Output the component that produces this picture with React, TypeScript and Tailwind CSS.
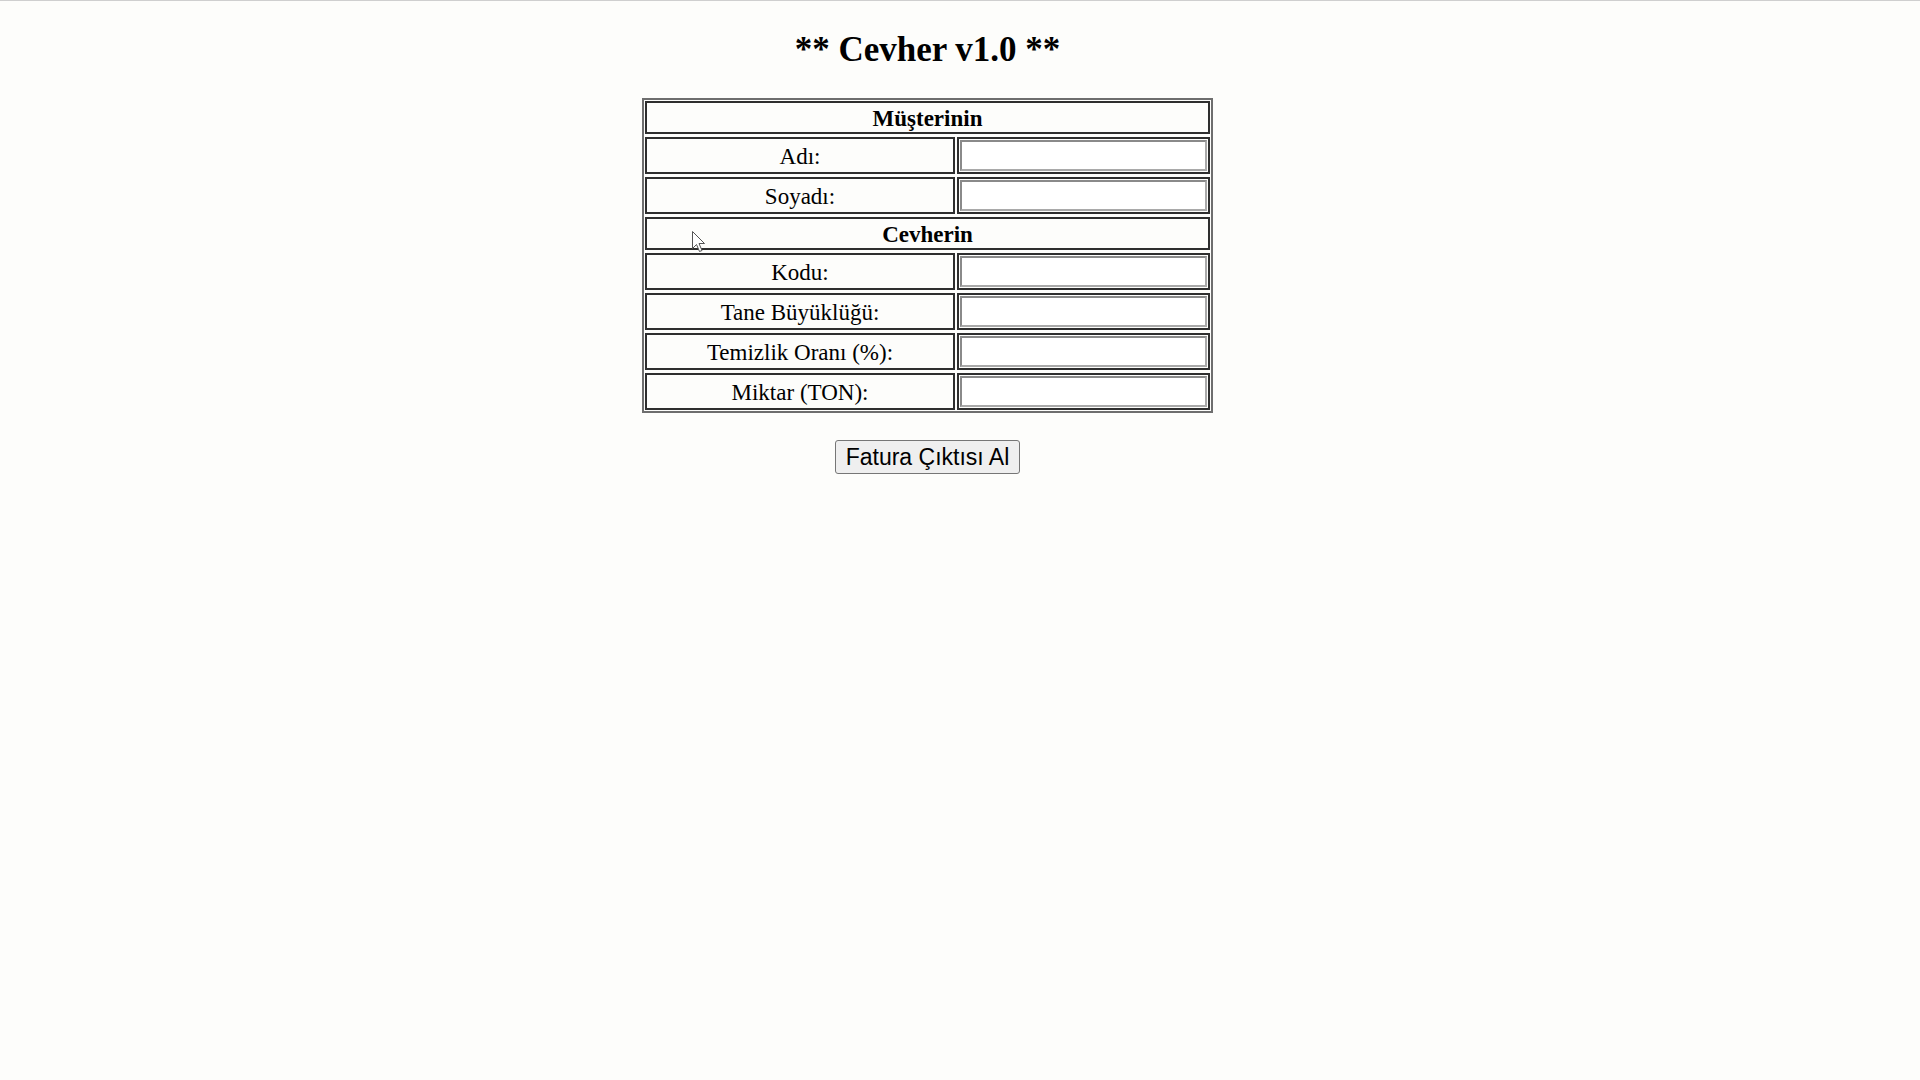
import React from 'react';

const customerRows = ['Adı:', 'Soyadı:'];
const oreRows = ['Kodu:', 'Tane Büyüklüğü:', 'Temizlik Oranı (%):', 'Miktar (TON):'];

const serif = { fontFamily: '"Liberation Serif", "Times New Roman", serif' };

function SectionRow({ title }: { title: string }) {
  return (
    <div className="h-[33px] pt-[2px] border-2 border-[#2e2e2e] flex items-center justify-center font-bold text-[23px]">
      {title}
    </div>
  );
}

function FieldRow({ label }: { label: string }) {
  return (
    <div className="grid grid-cols-[310px_253px] gap-x-[2px]">
      <div className="h-[37px] pt-[2px] border-2 border-[#2e2e2e] flex items-center justify-center text-[23px]">
        {label}
      </div>
      <div className="h-[37px] border-2 border-[#2e2e2e] p-px">
        <input
          type="text"
          className="block w-full h-full bg-white border-2 border-t-[#8a8a8a] border-l-[#8a8a8a] border-b-[#a9a9a9] border-r-[#a9a9a9] outline-none px-1 text-[16px]"
        />
      </div>
    </div>
  );
}

export default function App() {
  return (
    <div className="relative min-h-[1080px] bg-[#fdfdfb] border-t border-[#cfcfcf] text-black">
      <div className="flex flex-col items-center pr-[65px] pt-[29px]">
        <h1 className="font-bold text-[35px] leading-[40px]" style={serif}>
          ** Cevher v1.0 **
        </h1>

        {/* form table */}
        <div
          className="mt-[28px] w-[571px] border-2 border-[#6e6e6e] p-px flex flex-col gap-y-[3px] leading-none"
          style={serif}
        >
          <SectionRow title="Müşterinin" />
          {customerRows.map((label) => (
            <FieldRow key={label} label={label} />
          ))}
          <SectionRow title="Cevherin" />
          {oreRows.map((label) => (
            <FieldRow key={label} label={label} />
          ))}
        </div>

        <button
          type="button"
          className="mt-[27px] h-[34px] px-[10px] bg-[#efefef] border border-[#767676] rounded-[3px] text-[23px] leading-none text-black"
          style={{ fontFamily: '"Liberation Sans", Arial, sans-serif' }}
        >
          Fatura Çıktısı Al
        </button>
      </div>

      {/* mouse pointer captured in the screenshot */}
      <svg
        className="absolute left-[692px] top-[230px]"
        width="14"
        height="22"
        viewBox="0 0 14 22"
      >
        <path
          d="M0.5 0.5 L0.5 17.5 L4.5 13.5 L7.5 20.5 L10 19.5 L7 12.5 L12.5 12.5 Z"
          fill="#ffffff"
          stroke="#555555"
          strokeWidth="1"
        />
      </svg>
    </div>
  );
}
